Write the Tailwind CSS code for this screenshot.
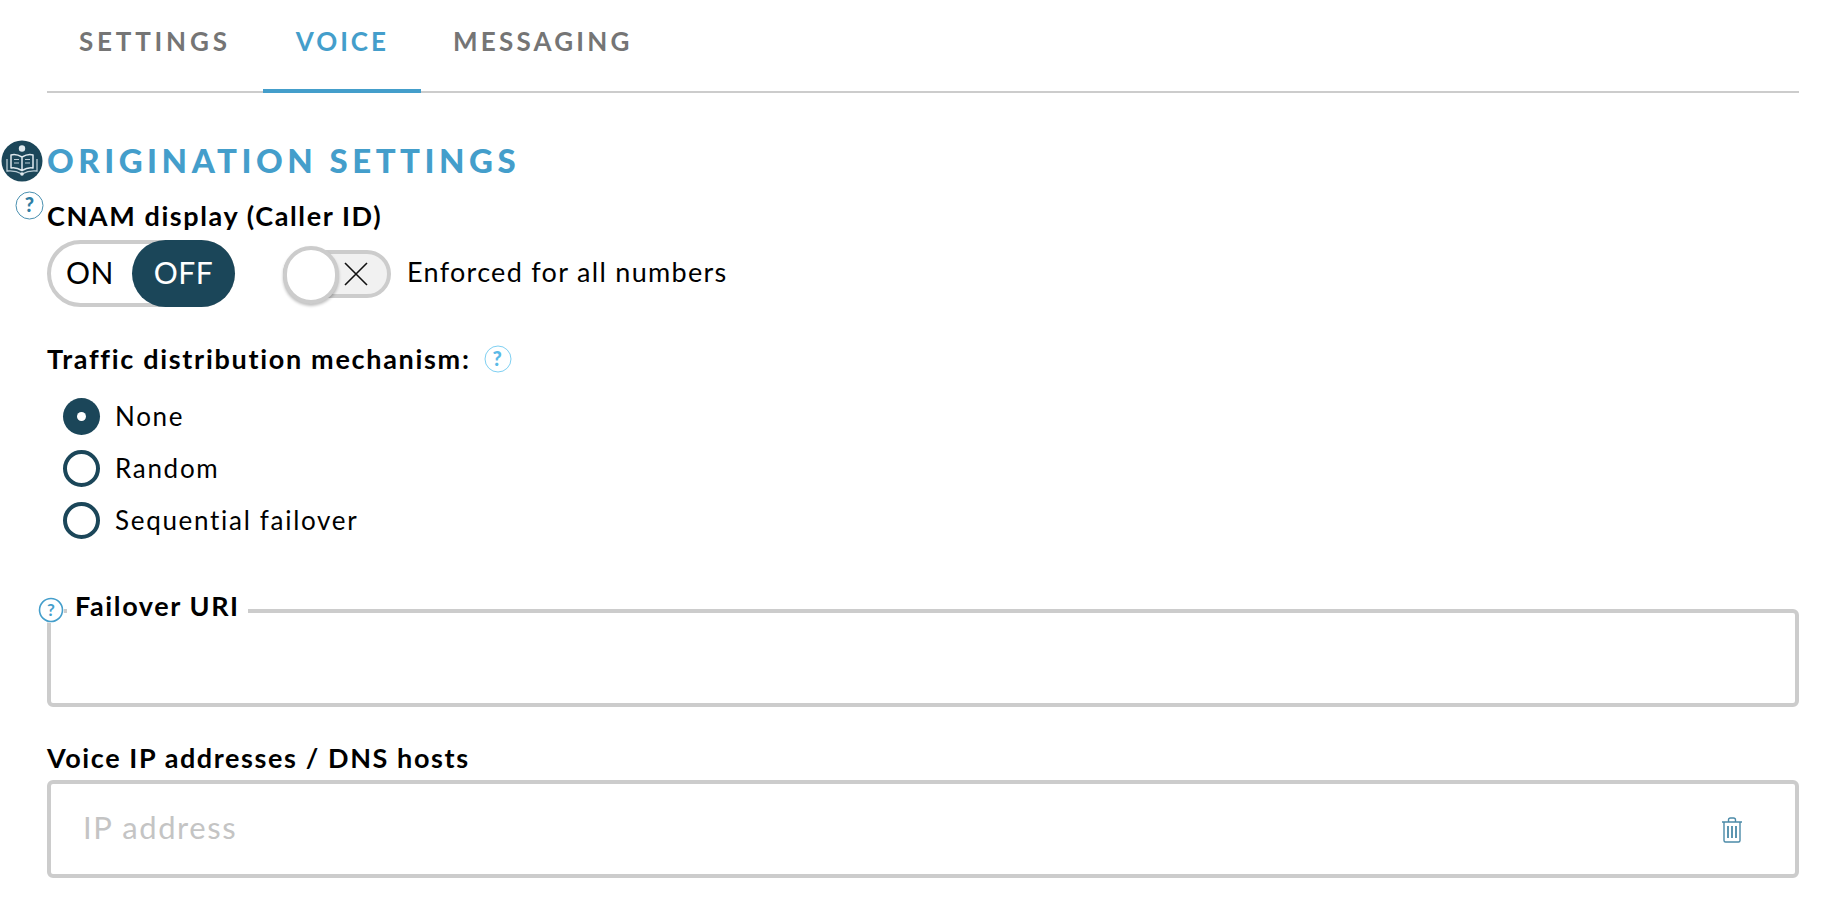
<!DOCTYPE html>
<html lang="en">
<head>
    <meta charset="UTF-8">
    <title>Voice settings</title>
    <script src="https://cdn.jsdelivr.net/npm/@tailwindcss/browser@4"></script>
</head>
<body class="bg-white text-black font-['Lato','Open_Sans',sans-serif] overflow-hidden">
<div class="relative h-[900px] w-[1846px] px-[47px]">

    <!-- Tabs -->
    <div class="flex h-[93px] border-b-2 border-[#cccccc] text-[26px] font-bold leading-none">
        <div class="px-[32px] pt-[28px] tracking-[3.8px] text-[#757575]">SETTINGS</div>
        <div class="pl-[33px] pr-[32px] pt-[28px] h-[93px] tracking-[3px] border-b-4 border-[#449ecb] text-[#449ecb]">VOICE</div>
        <div class="px-[32px] pt-[28px] tracking-[3.2px] text-[#757575]">MESSAGING</div>
    </div>

    <!-- Heading -->
    <div class="relative mt-[47px]">
        <h2 class="text-[33px] leading-[40px] font-black tracking-[4.5px] text-[#449ecb]">ORIGINATION SETTINGS</h2>
        <svg class="absolute left-[-46px] top-[0px] blur-[0.4px]" width="42" height="42" viewBox="0 0 42 42">
            <circle cx="21" cy="21" r="20.5" fill="#1b4659"/>
            <circle cx="21" cy="8.5" r="3.2" fill="#dfe9ee"/>
            <path d="M21 17 Q15 13.5 10 15 V28 Q15 27 21 30.5 Q27 27 32 28 V15 Q27 13.5 21 17 V30.5" fill="none" stroke="#dfe9ee" stroke-width="1.5" stroke-linejoin="round"/>
            <path d="M6 19 V31 Q14 30 21 34 Q28 30 36 31 V19" fill="none" stroke="#b9ccd5" stroke-width="1.3"/>
            <path d="M13 19.5 H18 M13 23 H18 M24 19.5 H29 M24 23 H29" stroke="#b9ccd5" stroke-width="1.2"/>
            <circle cx="21" cy="34" r="1.8" fill="#dfe9ee"/>
        </svg>
        <svg class="absolute left-[-32px] top-[51px]" width="29" height="29" viewBox="0 0 29 29">
            <circle cx="14.5" cy="14.5" r="13.5" fill="#fff" stroke="#4a90b0" stroke-width="1"/>
            <text x="14.5" y="21" text-anchor="middle" font-family="Lato" font-weight="900" font-size="20" fill="#2f7ea3">?</text>
        </svg>
    </div>

    <!-- CNAM -->
    <div class="mt-[20px] text-[27px] leading-[32px] font-bold tracking-[1.6px]">CNAM display (Caller ID)</div>
    <div class="mt-[8px] flex items-center">
        <div class="flex h-[67px] w-[188px] rounded-full border-[4px] border-[#cccccc] text-[30px] tracking-[0.5px]">
            <div class="w-[85px] flex items-center justify-center pr-[7px] pb-[3px]">ON</div>
            <div class="m-[-4px] w-[103px] shrink-0 rounded-full bg-[#1b4659] text-white flex items-center justify-center pb-[3px]">OFF</div>
        </div>
        <div class="relative ml-[48px] h-[48px] w-[108px] rounded-full border-[4px] border-[#cccccc] bg-[#f1f1f1] flex items-center justify-end pr-[18px]">
            <svg width="26" height="26" viewBox="0 0 26 26"><path d="M2 2 L24 24 M24 2 L2 24" stroke="#111" stroke-width="1.6"/></svg>
            <div class="absolute left-[-4px] top-[-8px] h-[58px] w-[56px] rounded-full border-[4px] border-[#cccccc] bg-white shadow-[0_2px_3px_rgba(0,0,0,0.25)]"></div>
        </div>
        <div class="ml-[16px] pb-[3px] text-[27px] tracking-[1.3px]">Enforced for all numbers</div>
    </div>

    <!-- Traffic distribution -->
    <div class="mt-[36px] flex items-center text-[27px] leading-[32px] font-bold tracking-[1.7px]">
        Traffic distribution mechanism:
        <svg class="ml-[13px]" width="28" height="28" viewBox="0 0 28 28">
            <circle cx="14" cy="14" r="13" fill="#fff" stroke="#7fd0f2" stroke-width="1"/>
            <text x="14" y="21" text-anchor="middle" font-family="Lato" font-weight="900" font-size="20" fill="#5ab9e6">?</text>
        </svg>
    </div>
    <div class="mt-[23px] ml-[16px] flex flex-col gap-[15px] text-[26px] tracking-[1.7px]">
        <div class="flex items-center gap-[15px] h-[37px]">
            <span class="flex h-[37px] w-[37px] items-center justify-center rounded-full bg-[#1b4659]"><span class="h-[9px] w-[9px] rounded-full bg-white"></span></span>None
        </div>
        <div class="flex items-center gap-[15px] h-[37px]">
            <span class="h-[37px] w-[37px] rounded-full border-[4px] border-[#1b4659]"></span>Random
        </div>
        <div class="flex items-center gap-[15px] h-[37px]">
            <span class="h-[37px] w-[37px] rounded-full border-[4px] border-[#1b4659]"></span>Sequential failover
        </div>
    </div>

    <!-- Failover URI -->
    <div class="relative mt-[70px] h-[98px] rounded-[6px] border-[4px] border-[#cccccc]">
        <div class="absolute left-[16px] top-[-23px] bg-white px-[8px] text-[27px] leading-[32px] font-bold tracking-[1.6px]">Failover URI</div>
        <svg class="absolute left-[-13px] top-[-16px] bg-white rounded-full" width="26" height="26" viewBox="0 0 26 26">
            <circle cx="13" cy="13" r="11.5" fill="#fff" stroke="#449ecb" stroke-width="1.6"/>
            <text x="13" y="19" text-anchor="middle" font-family="Lato" font-weight="700" font-size="17" fill="#449ecb">?</text>
        </svg>
    </div>

    <!-- Voice IP -->
    <div class="mt-[35px] text-[27px] leading-[32px] font-bold tracking-[1.6px]">Voice IP addresses / DNS hosts</div>
    <div class="mt-[6px] h-[98px] rounded-[6px] border-[4px] border-[#cccccc] flex items-center justify-between pl-[32px] pr-[52px]">
        <span class="pb-[4px] text-[31px] tracking-[1.6px] text-[#c4c4c4]">IP address</span>
        <svg class="mt-[2px]" width="22" height="26" viewBox="0 0 22 26" fill="none" stroke="#4b8aa8" stroke-width="1.4">
            <path d="M1 5 H21 M7.5 5 V3 Q7.5 1 9.5 1 H12.5 Q14.5 1 14.5 3 V5 M3 5 V23.5 Q3 25 4.5 25 H17.5 Q19 25 19 23.5 V5"/>
            <path d="M7 9 V21 M11 9 V21 M15 9 V21" stroke-width="1.8"/>
        </svg>
    </div>
</div>
</body>
</html>
